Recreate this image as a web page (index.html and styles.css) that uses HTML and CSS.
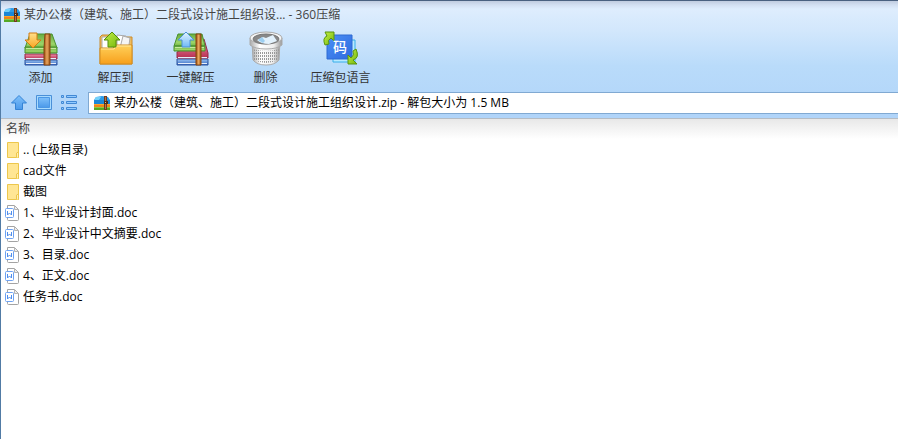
FILE: index.html
```html
<!DOCTYPE html>
<html lang="zh-CN">
<head>
<meta charset="utf-8">
<title>360压缩</title>
<link rel="stylesheet" href="styles.css">
</head>
<body>
<svg class="defs" aria-hidden="true">
  <defs>
    <linearGradient id="green" x1="0" y1="0" x2="0" y2="1"><stop offset="0" stop-color="#68ac42"/><stop offset=".7" stop-color="#9bd468"/><stop offset="1" stop-color="#73b843"/></linearGradient>
    <linearGradient id="lime" x1="0" y1="0" x2="1" y2="1"><stop offset="0" stop-color="#c4ee45"/><stop offset="1" stop-color="#72b80d"/></linearGradient>
    <linearGradient id="amber" x1="0" y1="0" x2="0" y2="1"><stop offset="0" stop-color="#ffe08a"/><stop offset="1" stop-color="#f8a622"/></linearGradient>
    <linearGradient id="orange" x1="0" y1="0" x2="0" y2="1"><stop offset="0" stop-color="#ffd05a"/><stop offset="1" stop-color="#f7a01c"/></linearGradient>
    <linearGradient id="sky" x1="0" y1="0" x2="0" y2="1"><stop offset="0" stop-color="#e4f5ff"/><stop offset="1" stop-color="#6fb9f7"/></linearGradient>
    <linearGradient id="red" x1="0" y1="0" x2="0" y2="1"><stop offset="0" stop-color="#f492ae"/><stop offset="1" stop-color="#b62f52"/></linearGradient>
    <linearGradient id="blue" x1="0" y1="0" x2="0" y2="1"><stop offset="0" stop-color="#9bc6f6"/><stop offset="1" stop-color="#3566bd"/></linearGradient>
    <linearGradient id="strap" x1="0" y1="0" x2="1" y2="0"><stop offset="0" stop-color="#9c4f14"/><stop offset=".5" stop-color="#e8a55c"/><stop offset="1" stop-color="#a0571b"/></linearGradient>
    <linearGradient id="metal" x1="0" y1="0" x2="1" y2="0"><stop offset="0" stop-color="#aaa"/><stop offset=".3" stop-color="#fff"/><stop offset=".75" stop-color="#eee"/><stop offset="1" stop-color="#999"/></linearGradient>
    <linearGradient id="tile" x1="0" y1="0" x2="1" y2="1"><stop offset="0" stop-color="#4b90f4"/><stop offset="1" stop-color="#2f6ae0"/></linearGradient>
    <linearGradient id="navblue" x1="0" y1="0" x2="0" y2="1"><stop offset="0" stop-color="#7fc0fa"/><stop offset="1" stop-color="#4b99ea"/></linearGradient>
    <pattern id="mesh" width="2" height="3" patternUnits="userSpaceOnUse"><rect width="1" height="2" fill="#999"/></pattern>
  </defs>
  <symbol id="archive" viewBox="0 0 16 14">
    <path d="M2 1 8 0l6 1 2 3v2H0V4z" fill="#2c9be8"/><path d="M2 1h5L5 4H0z" fill="#72d0fa"/>
    <path d="M0 4h16v4H0z" fill="#1b87d8"/>
    <path d="M0 8h16v3H0z" fill="#ee861c"/><path d="M0 8h16v1H0z" fill="#ffa52b"/>
    <path d="M0 11h16v3H0z" fill="#55a825"/><path d="M0 11h16v1H0z" fill="#8ccb45"/>
    <path d="M10 0h3v14h-3z" fill="#713a1f"/><path d="M11 1h1v12h-1z" fill="#b47743"/><path d="M10 5h4v3h-4z" fill="#4d2a1c"/><path d="M11 6h1v1h-1z" fill="#f4c27b"/>
  </symbol>
  <symbol id="folder" viewBox="0 0 14 16">
    <path d="M2.500.5h11v9.500l.5 1v4.500H2.500z" fill="#ffe694" stroke="#edc74c"/><path d="M11.500 15.500V11l2-1v5.500" fill="#fff0b5" stroke="#edc74c"/>
  </symbol>
  <symbol id="doc" viewBox="0 0 14 16">
    <path d="M2.500.5h7l4 4v10q0 1-1 1h-9q-1 0-1-1z" fill="#fff" stroke="#a3a3a3"/><path d="M9.500 1v3.500H13" fill="#eee" stroke="#b5b5b5"/>
    <rect x=".5" y="3.500" width="8" height="9" rx="1" fill="#fff" stroke="#6ea2f2"/><path d="M2.500 6v4l2-2 2 2V6" fill="none" stroke="#4f8dec"/>
  </symbol>
</svg>
<div class="window">
  <header class="chrome">
    <div class="titlebar">
      <svg class="archive-icon"><use href="#archive"/></svg>
      <h1>某办公楼（建筑、施工）二段式设计施工组织设... - 360压缩</h1>
    </div>
    <div class="toolbar">
      <button type="button">
        <svg viewBox="0 0 36 36"><path d="M2 29h32v5H2z" fill="url(#blue)" stroke="#2c529e"/><path d="M2 23h32v5H2z" fill="url(#red)" stroke="#972848"/><path d="M3 27.500h30M3 32.500h30" stroke="#e6eefb"/><path d="M7 3h22l5 14H2z" fill="url(#green)" stroke="#4a9130"/><path d="M2 16h32v6H2z" fill="url(#green)" stroke="#4a9130"/><path d="M3 17.500h30" stroke="#c5ea9c"/><path d="M22 3h5v31h-6V17z" fill="url(#strap)" stroke="#83440f"/><path d="M6 2h8v7h4l-8 8-8-8h4z" fill="url(#amber)" stroke="#d17b12"/></svg>
        <span>添加</span></button>
      <button type="button">
        <svg viewBox="0 0 36 36"><path d="M2 33V6l2-2h8l2 2h20v27z" fill="#f2bd5c" stroke="#c98a2c"/><path d="M4 6h14v14H4zM19 4l9 1v15h-9z" fill="#fff" stroke="#aaa"/><path d="m25 5 7 2-2 14h-9z" fill="#f5f5f5" stroke="#aaa"/><path d="M2 17h13l3-3h16v19H2z" fill="url(#orange)" stroke="#d18c20"/><path d="M3 18h13l3-3h14" fill="none" stroke="#ffe9a0"/><path d="m14 1 8 8h-4v7h-8V9H6z" fill="url(#lime)" stroke="#548d0b"/></svg>
        <span>解压到</span></button>
      <button type="button">
        <svg viewBox="0 0 36 36"><path d="M4 28h31v6H4z" fill="url(#blue)" stroke="#2c529e"/><path d="m31 8 4 14v5H4v-6z" fill="url(#red)" stroke="#972848"/><path d="M5 26.500h29M5 32.500h29" stroke="#e6eefb"/><path d="M5 3h24l3 12H1z" fill="url(#green)" stroke="#4a9130"/><path d="M1 15h31v5H1z" fill="url(#green)" stroke="#4a9130"/><path d="M2 16.500h29" stroke="#c5ea9c"/><path d="M23 3h5v31h-5z" fill="url(#strap)" stroke="#83440f"/><path d="m13 1 8 8h-4v7H9V9H5z" fill="url(#sky)" stroke="#4c91d8"/></svg>
        <span>一键解压</span></button>
      <button type="button">
        <svg viewBox="0 0 36 36"><path d="M4 10h28l-1 19q-4 5-13 5T5 29z" fill="url(#metal)" stroke="#aaa"/><path d="M5 18q13 4 26 0l-1 11q-12 6-24 0z" fill="url(#mesh)"/><path d="M2 7v7q5 4 16 4t16-4V7z" fill="url(#metal)" stroke="#aaa"/><ellipse cx="18" cy="7" rx="16" ry="6" fill="#f5f5f5" stroke="#aaa"/><ellipse cx="18" cy="8" rx="13" ry="5" fill="#888" stroke="#777"/><path d="m9 9 6-3 3 1 7-3 4 6-8 3q-8 0-12-4z" fill="#e2f1fc"/><path d="m10 9 4-3 3 4-2 2z" fill="#9dcff1"/></svg>
        <span>删除</span></button>
      <button type="button">
        <svg viewBox="0 0 36 36"><path d="M10 9h22v22H10z" fill="#b9eaff" stroke="#36aeea"/><path d="M4 4h25v24H4z" fill="url(#tile)" stroke="#2f6bd2"/><path d="M2 14Q-1 7 4 5L2 1h9v9L8 7q-4 2-2 6z" fill="url(#lime)" stroke="#5a940d"/><path d="M33 18q4 9-3 11l4 4h-9v-9l3 3q4-3 2-7z" fill="url(#lime)" stroke="#5a940d"/><text x="17" y="21" class="tile-char">码</text></svg>
        <span>压缩包语言</span></button>
    </div>
    <div class="navigation">
      <button type="button" aria-label="上级目录"><svg viewBox="0 0 16 16"><path d="m8 .5 7.500 7.500h-4v6.500h-7V8h-4z" fill="url(#navblue)" stroke="#3583d5"/></svg></button>
      <button type="button" aria-label="图标视图"><svg viewBox="0 0 16 16"><path d="M.5.500h15v14H.5z" fill="#a8dafe" stroke="#4a90d8"/><path d="M2.500 2.500h11v10h-11z" fill="url(#navblue)" stroke="#4b97e5"/></svg></button>
      <button type="button" aria-label="列表视图"><svg viewBox="0 0 16 16"><path d="M.5.500h2v2h-2zM5.500.500h10v2h-10zM.5 6.500h2v2h-2zM5.500 6.500h10v2h-10zM.5 12.500h2v2h-2zM5.500 12.500h10v2h-10z" fill="#91caff" stroke="#4188d4"/></svg></button>
      <label class="address"><svg class="archive-icon"><use href="#archive"/></svg><input type="text" aria-label="地址" value="某办公楼（建筑、施工）二段式设计施工组织设计.zip - 解包大小为 1.5 MB"></label>
    </div>
  </header>
  <main>
    <table>
      <thead><tr><th scope="col">名称</th></tr></thead>
      <tbody>
        <tr><td><div class="entry"><svg><use href="#folder"/></svg>.. (上级目录)</div></td></tr>
        <tr><td><div class="entry"><svg><use href="#folder"/></svg>cad文件</div></td></tr>
        <tr><td><div class="entry"><svg><use href="#folder"/></svg>截图</div></td></tr>
        <tr><td><div class="entry"><svg><use href="#doc"/></svg>1、毕业设计封面.doc</div></td></tr>
        <tr><td><div class="entry"><svg><use href="#doc"/></svg>2、毕业设计中文摘要.doc</div></td></tr>
        <tr><td><div class="entry"><svg><use href="#doc"/></svg>3、目录.doc</div></td></tr>
        <tr><td><div class="entry"><svg><use href="#doc"/></svg>4、正文.doc</div></td></tr>
        <tr><td><div class="entry"><svg><use href="#doc"/></svg>任务书.doc</div></td></tr>
      </tbody>
    </table>
  </main>
</div>
</body>
</html>
```
FILE: styles.css
```css
* { box-sizing: border-box; }
body { margin: 0; background: #fff; color: #000; font: 12px/16px "Open Sans", "Noto Sans CJK SC", sans-serif; }
button, input { font: inherit; color: inherit; border: 0; padding: 0; background: none; }
svg { display: block; flex: none; }
.defs { position: absolute; width: 0; height: 0; }
.window { min-height: 100vh; border-top: 1px solid #4a6180; border-left: 1px solid #517ba5; }
.chrome { background: linear-gradient(#c0ccdf, #d3e0f2 4px, #deedfd 8px, #d2e7fc 30px, #b9dbfa 65px, #b0d4f9); border-bottom: 1px solid #b5bcc4; padding-bottom: 4px; }
.titlebar { display: flex; align-items: center; gap: 4px; height: 27px; padding-left: 3px; }
h1 { margin: 0; font-size: 12px; font-weight: 400; color: #444; white-space: nowrap; }
.archive-icon { width: 16px; height: 14px; }
.toolbar { display: flex; height: 64px; padding: 3px 0 0 2px; }
.toolbar button { display: flex; flex-direction: column; align-items: center; gap: 3px; width: 75px; color: #333; white-space: nowrap; }
.toolbar svg { width: 36px; height: 36px; }
.tile-char { fill: #fff; font-size: 14px; font-weight: 500; text-anchor: middle; }
.navigation { display: flex; align-items: center; gap: 9px; padding-left: 10px; }
.navigation button svg { width: 16px; height: 16px; }
.address { flex: 1; display: flex; align-items: center; gap: 4px; height: 22px; margin-left: 2px; padding-left: 5px; background: #fff; border: 1px solid #80a9d2; border-right: 0; }
.address input { flex: 1; min-width: 0; outline: 0; }
main { background: linear-gradient(#e8e8e8, #fff 20px); }
table { width: 100%; border-collapse: collapse; }
th { height: 20px; padding: 0 5px; text-align: left; font-weight: 400; color: #444; }
td { height: 21px; padding: 0 4px; }
.entry { display: flex; align-items: center; gap: 4px; }
.entry svg { width: 14px; height: 16px; }
```
